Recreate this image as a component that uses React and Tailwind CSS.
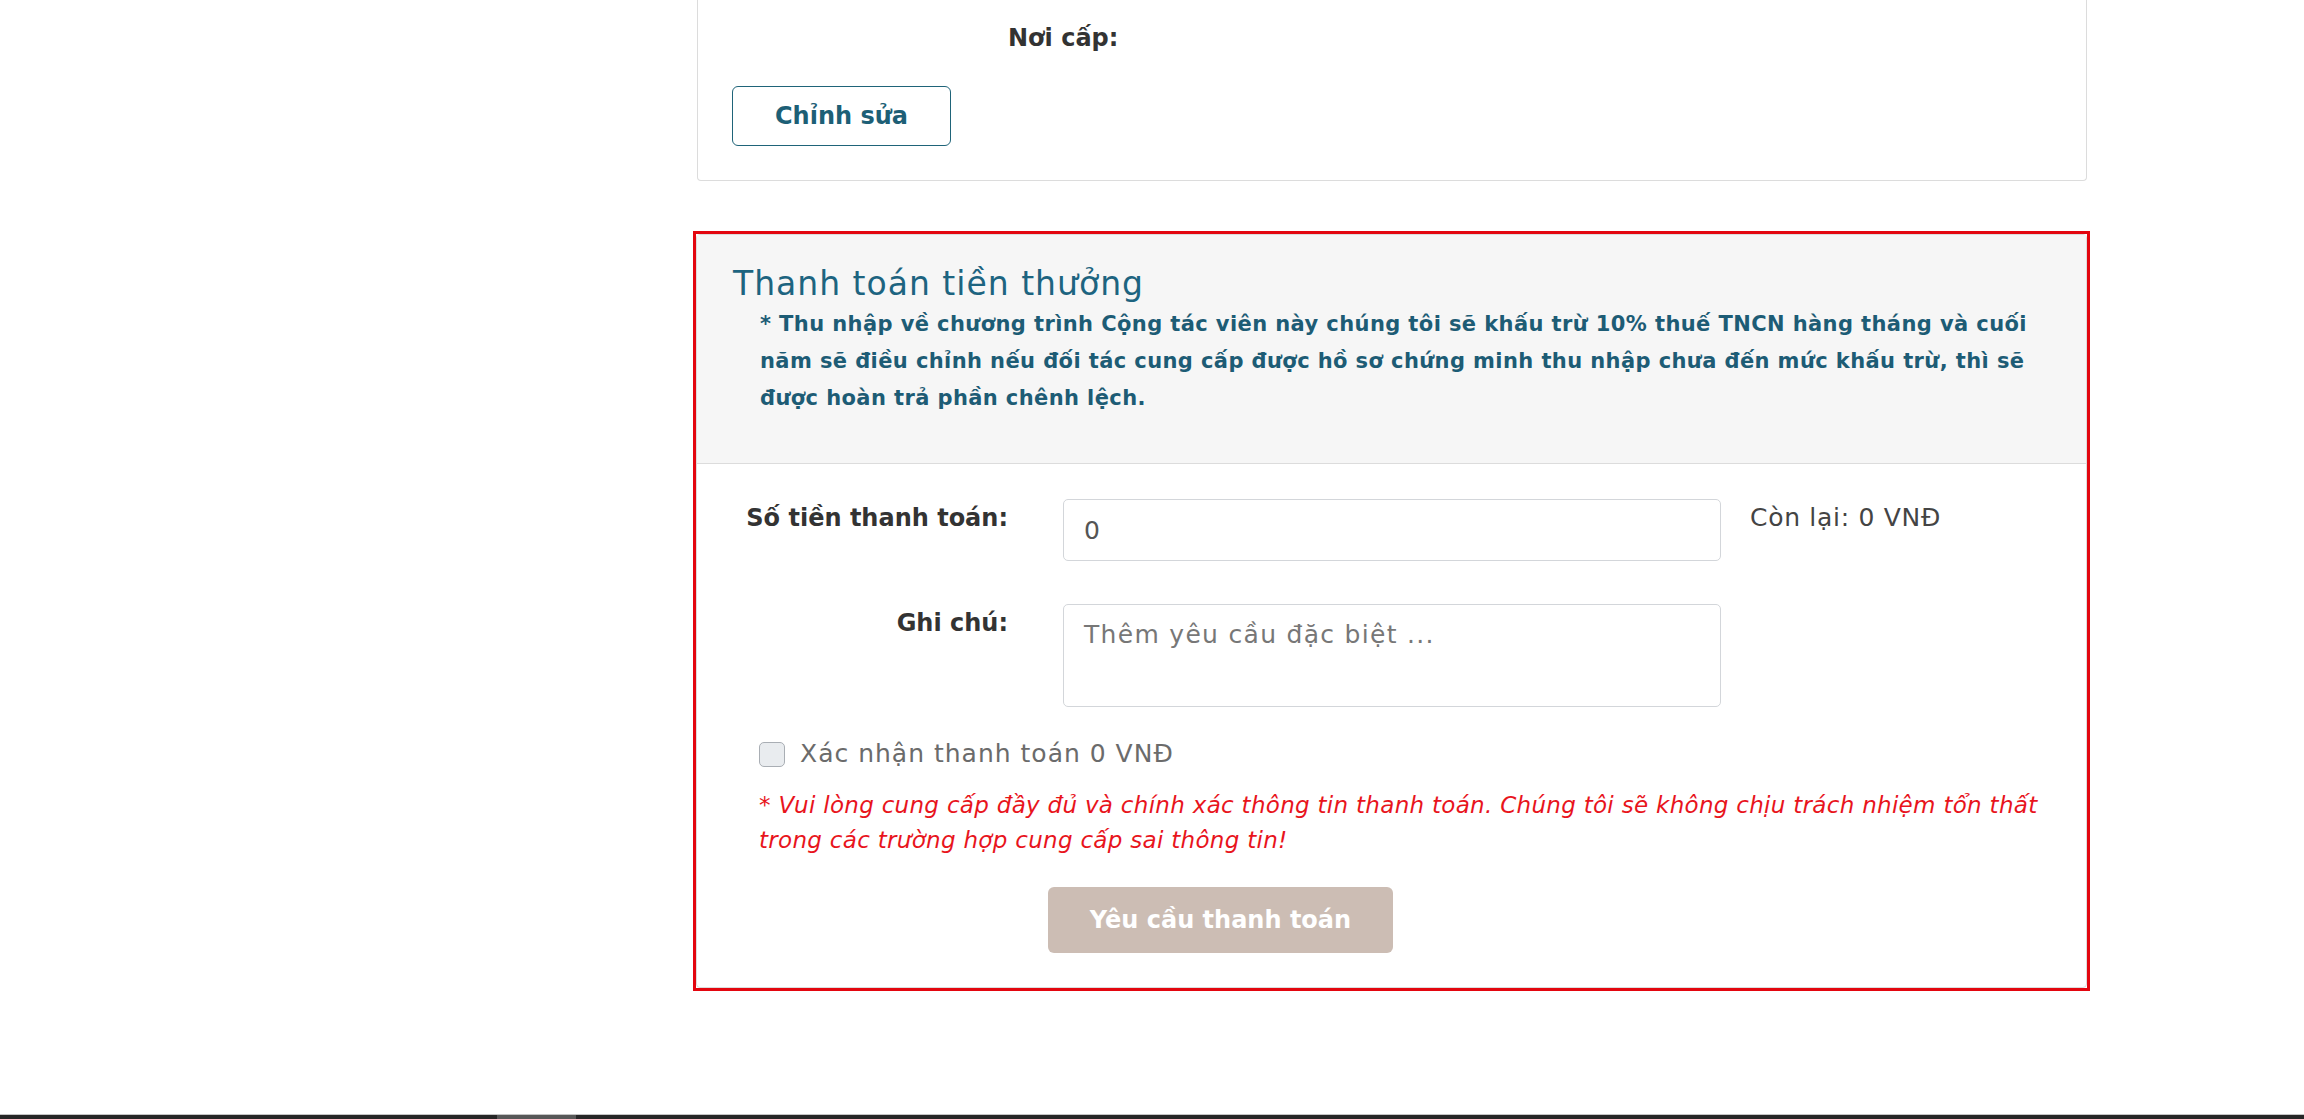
function PaymentForm() {
    return (
        <div className="border border-[#dcdcdc] rounded-[4px] bg-white">
            <div className="bg-[#f6f6f6] border-b border-[#dcdcdc] pl-[36px] pr-[36px] pt-[30px] pb-[46px]">
                <h4 className="text-[33px] leading-[38px] font-normal text-[#1d6480] tracking-[1px]">
                    Thanh toán tiền thưởng
                </h4>
                <p className="ml-[27px] mt-[3px] text-[21px] leading-[37px] font-bold text-[#1d5c75] tracking-[0.4px]">
                    * Thu nhập về chương trình Cộng tác viên này chúng tôi sẽ khấu trừ 10% thuế TNCN hàng tháng và cuối
                    năm sẽ điều chỉnh nếu đối tác cung cấp được hồ sơ chứng minh thu nhập chưa đến mức khấu trừ, thì sẽ
                    được hoàn trả phần chênh lệch.
                </p>
            </div>

            <div className="pl-[36px] pr-[36px] pt-[35px] pb-[34px]">
                <div className="flex items-start">
                    <label className="w-[275px] pt-[4px] text-right text-[24px] leading-[30px] font-bold text-[#333]">
                        Số tiền thanh toán:
                    </label>
                    <input
                        type="text"
                        defaultValue="0"
                        className="ml-[55px] w-[658px] h-[62px] px-[20px] border border-[#d3d6da] rounded-[5px] text-[25px] text-[#555] outline-none"
                    />
                    <span className="ml-[29px] pt-[4px] text-[25px] leading-[30px] text-[#444] tracking-[0.7px]">
                        Còn lại: 0 VNĐ
                    </span>
                </div>

                <div className="flex items-start mt-[43px]">
                    <label className="w-[275px] pt-[4px] text-right text-[24px] leading-[30px] font-bold text-[#333]">
                        Ghi chú:
                    </label>
                    <textarea
                        placeholder="Thêm yêu cầu đặc biệt ..."
                        className="ml-[55px] w-[658px] h-[103px] px-[20px] py-[15px] border border-[#d3d6da] rounded-[5px] text-[25px] leading-[30px] tracking-[1.3px] text-[#555] placeholder:text-[#777] outline-none resize-none"
                    />
                </div>

                <div className="ml-[26px] mt-[31px] flex items-center gap-[15px]">
                    <span className="w-[26px] h-[25px] rounded-[5px] border border-[#a9aeb4] bg-[#e9ecef]" />
                    <span className="text-[25px] leading-[32px] text-[#6b6b6b] tracking-[1px]">
                        Xác nhận thanh toán 0 VNĐ
                    </span>
                </div>

                <p className="ml-[26px] mr-[-10px] mt-[18px] text-[23px] leading-[35px] italic text-[#e8141c] tracking-[0.3px]">
                    * Vui lòng cung cấp đầy đủ và chính xác thông tin thanh toán. Chúng tôi sẽ không chịu trách nhiệm tổn thất
                    trong các trường hợp cung cấp sai thông tin!
                </p>

                <button className="ml-[315px] mt-[29px] w-[345px] h-[66px] rounded-[6px] bg-[#ccbdb4] text-white text-[24px] font-bold">
                    Yêu cầu thanh toán
                </button>
            </div>
        </div>
    );
}

function App() {
    return (
        <div className="h-[1119px] flex flex-col bg-white font-['DejaVu_Sans',sans-serif]">
            <div className="flex-1 flex">
                <div className="w-[693px]" />
                <div className="w-[1397px]">
                    <div className="mx-[4px] mr-[3px] border-x border-b border-[#dcdcdc] rounded-b-[4px] px-[34px] pb-[34px]">
                        <div className="pt-[23px] ml-[276px] text-[24px] leading-[30px] font-bold text-[#333]">
                            Nơi cấp:
                        </div>
                        <button className="mt-[33px] w-[219px] h-[60px] rounded-[6px] border-[1.5px] border-[#1f6479] text-[24px] font-bold text-[#1d5f76]">
                            Chỉnh sửa
                        </button>
                    </div>

                    <div className="mt-[50px] border-[3px] border-[#e3060f]">
                        <PaymentForm />
                    </div>
                </div>
            </div>

            <div className="h-[5px] border-t border-[#c4c4c4] bg-[#262626] flex">
                <div className="ml-[497px] w-[79px] bg-[#575757]" />
            </div>
        </div>
    );
}

export default App;
